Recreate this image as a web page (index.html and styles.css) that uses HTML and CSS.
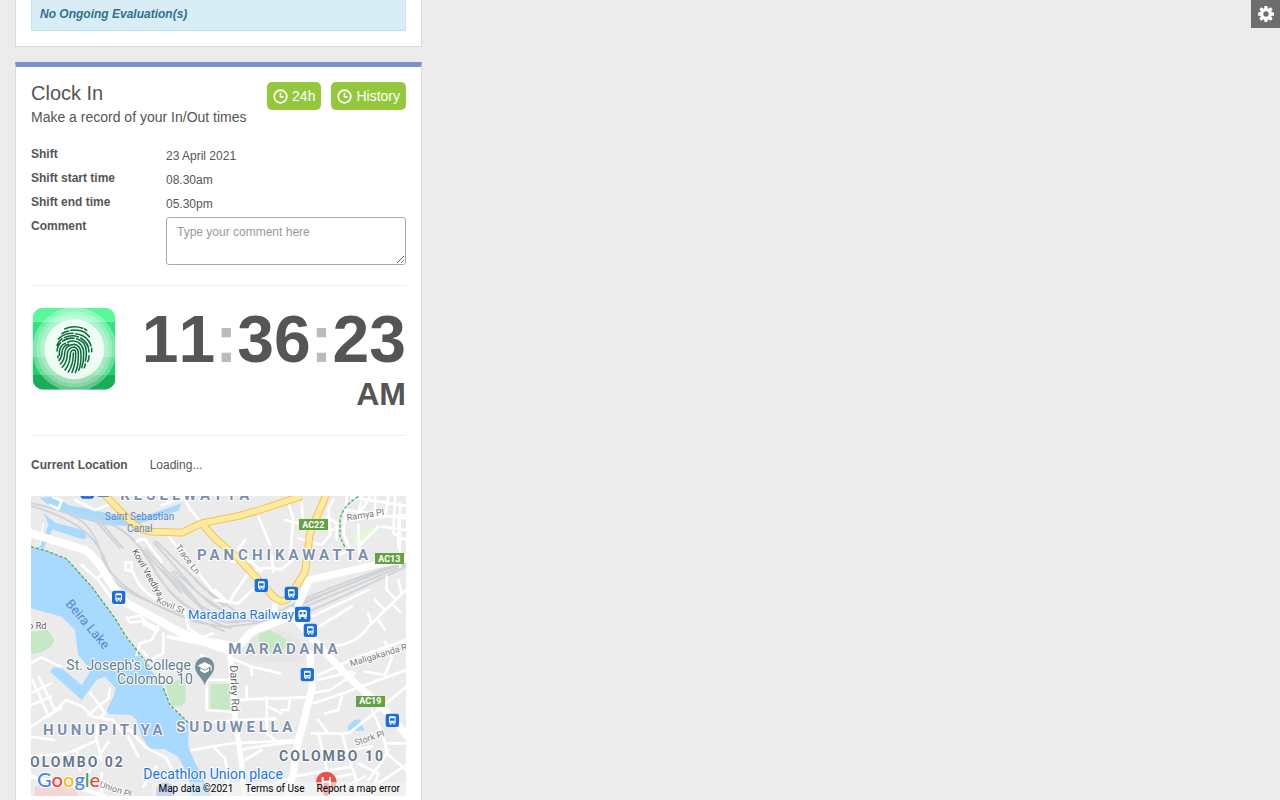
FILE: index.html
```html
<!DOCTYPE html>
<html lang="en">
<head>
<meta charset="utf-8">
<title>Clock In</title>
<link rel="stylesheet" href="styles.css">
</head>
<body>
<button class="settings" type="button" aria-label="Settings">
  <svg width="18" height="18" viewBox="0 0 18 18" aria-hidden="true">
    <g fill="#fff"><circle cx="9" cy="9" r="5.8"/>
    <g id="teeth"><path d="M7.6 1h2.8l.8 4v8l-.8 4H7.6l-.8-4V5z"/><path d="M1 7.6v2.8l4 .8h8l4-.8V7.6l-4-.8H5z"/></g>
    <use href="#teeth" transform="rotate(45 9 9)"/></g>
    <circle cx="9" cy="9" r="2.7" fill="#6d6d6d"/>
  </svg>
</button>
<main class="column">
  <section class="card card-evaluations">
    <p class="notice">No Ongoing Evaluation(s)</p>
  </section>
  <section class="card card-clock">
    <header class="head">
      <div>
        <h1 class="title">Clock In</h1>
        <p class="subtitle">Make a record of your In/Out times</p>
      </div>
      <div class="actions">
        <button class="btn" type="button"><svg class="btn-icon" viewBox="0 0 14 14" aria-hidden="true"><circle cx="7" cy="7" r="5.9"/><path d="M7 3.4V7.4H10"/></svg>24h</button>
        <button class="btn" type="button"><svg class="btn-icon" viewBox="0 0 14 14" aria-hidden="true"><circle cx="7" cy="7" r="5.9"/><path d="M7 3.4V7.4H10"/></svg>History</button>
      </div>
    </header>
    <dl class="shift">
      <dt>Shift</dt><dd>23 April 2021</dd>
      <dt>Shift start time</dt><dd>08.30am</dd>
      <dt>Shift end time</dt><dd>05.30pm</dd>
      <dt><label for="comment">Comment</label></dt>
      <dd class="comment-cell"><textarea id="comment" class="comment" placeholder="Type your comment here"></textarea></dd>
    </dl>
    <div class="punch">
      <button class="finger" type="button" aria-label="Clock in">
        <svg width="86" height="86" viewBox="19 19 258 258" aria-hidden="true">
          <defs><clipPath id="tile"><rect x="24" y="24" width="248" height="246" rx="32"/></clipPath></defs>
          <path d="M21 252q8 18 26 20M275 252q-8 18-26 20" fill="none" stroke="#ddd" stroke-width="2"/>
          <g clip-path="url(#tile)">
            <path fill="#5bf79d" d="M24 24h248v42H24z"/><path fill="#32e57f" d="M24 66h248v52H24z"/>
            <path fill="#3ae181" d="M24 118h248v52H24z"/><path fill="#1fd06c" d="M24 170h248v56H24z"/>
            <path fill="#17ae57" d="M24 226h248v44H24z"/>
            <g fill="#fff"><circle cx="149" cy="149" r="126" fill-opacity=".32"/><circle cx="149" cy="149" r="114" fill-opacity=".24"/><circle cx="149" cy="149" r="103" fill-opacity=".22"/><circle cx="149" cy="149" r="90" fill-opacity=".8"/></g>
          </g>
          <g fill="none" stroke="#0b6b3a" stroke-width="4.6" stroke-linecap="round">
            <path d="M120 88Q147 76 174 86M180 88l6 4M112 102Q120 96 132 94M139 92Q165 88 182 99L194 111M101 118Q118 101 145 101M153 102Q174 104 188 119Q196 127 199 139"/>
            <path d="M97 137Q102 124 112 117M119 114Q140 104 161 112M168 115Q193 130 193 157M97 154Q99 137 108 129M114 124Q130 113 148 116M156 117Q184 125 185 156Q186 171 182 184M201 146v10"/>
            <path d="M104 167Q102 139 122 131M129 128Q146 120 162 129Q177 140 177 160Q178 185 171 204M100 169v5M103 182Q111 174 112 158Q114 138 132 134M107 193Q120 181 120 160Q121 138 149 134Q169 139 169 162Q170 193 162 212"/>
            <path d="M113 203Q128 186 128 162Q130 144 149 142Q162 147 161 164Q162 198 152 219M121 211Q136 192 137 163Q138 151 149 151Q154 153 153 164Q154 190 142 218M131 217Q146 194 146 164v-4M193 168Q193 179 189 186M182 193l-3 11"/>
          </g>
        </svg>
      </button>
      <div class="clock">
        <div class="time">11<span class="colon">:</span>36<span class="colon">:</span>23</div>
        <div class="meridiem">AM</div>
      </div>
    </div>
    <div class="location"><strong>Current Location</strong><span>Loading...</span></div>
    <div class="map">
      <svg class="map-canvas" viewBox="18 18 1125 900" preserveAspectRatio="xMidYMid slice" role="img" aria-label="Map of Colombo">
        <defs>
          <g id="bus"><rect x="-20" y="-20" width="40" height="40" rx="7" fill="#1a6fe0"/><path fill="#fff" fill-rule="evenodd" d="M-10-8q0-4 4-4H6q4 0 4 4V9H7v4H3V9h-6v4h-4V9h-3zM-7-6V1H7V-6zM-6 4v3h3V4zM3 4v3h3V4z"/></g>
        </defs>
        <path fill="#ebebeb" d="M18 18h1125v900H18z"/>
        <g fill="#e2e3e5"><path d="M640 450l140-30 100 70-60 30-150-10z" opacity=".6"/></g>
        <g fill="#c5e8c5">
          <path d="M18 425l50-6 20 30-8 18-30 20-32 6z"/><path d="M700 430l35-10 45 25 5 30-80 20z"/>
          <path d="M420 580l60-15 2 70-12 14h-30z"/><path d="M556 582h60v78h-60z"/>
          <path d="M985 125l78-16v12l-70 60z" fill="#e5f8d5"/>
        </g>
        <g fill="#a8daff">
          <path d="M18 170L65 183 125 207 200 290 270 385 300 440 335 480 350 510 395 560 415 595 435 650 490 698 490 770 512 822 560 918H500L490 860 460 800 420 778 375 778 350 740 335 690 320 675 250 672 245 660 265 620 272 595 240 560 215 570 170 630 75 545 85 532 110 535 170 585 203 532 185 525 160 495 153 450 150 420 110 380 18 355z"/>
          <path d="M45 25L90 18 130 45 230 65 320 92 470 40 460 62 320 108 240 105 150 80 90 60z"/>
          <path d="M55 68l35 30 85 22 12 24-15 4-90-30-26 58-15-4 30-68z"/>
          <path d="M968 708l20-18 20-2 -2 4 12 30h-48z"/>
        </g>
        <g fill="none" stroke="#d0d4d7" stroke-width="6">
          <path d="M18 40Q120 60 165 90T235 210Q265 270 330 310T510 395L620 415M18 48Q130 80 185 130T255 260Q300 310 410 350T600 425"/>
          <path d="M150 75Q270 90 325 150T400 260Q470 360 600 410M210 85Q310 115 350 180T430 300Q490 370 600 395"/>
          <path d="M215 95l70 80M225 95l70 80M385 155L520 310 600 365M392 152L545 300 640 370M440 245L530 350 640 400M448 242L560 345 660 395M510 270L600 350M355 180L470 310M360 175L500 320M400 230L560 385"/>
          <path d="M600 410Q720 405 800 360T1143 218M600 398Q720 390 790 350T1143 212M780 375Q900 325 1143 224M790 390Q960 320 1143 230M800 350L1110 226M570 380L700 395"/>
        </g>
        <g fill="none" stroke="#fff" stroke-width="8" stroke-linejoin="round" stroke-linecap="round">
          <path d="M75 45l25 12 10-25-25-10M150 30l60 30 55-20M170 225l50 45 55 75M215 265l20-15M320 235v-18h-18v22l22 5Q340 300 400 330L480 365 490 415 530 440M335 155l10-7h15l50 68M430 138L560 300 600 335M475 18l20 40 30 35M410 45l60-20"/>
          <path d="M305 380l10 18 45-5-15-15-30 4M400 410l-20 40-35 10-10 35M415 430v60l-40 20-25-30"/>
          <path d="M55 100L45 165" stroke-width="4"/>
          <path d="M18 520l30-18 60 28M22 570l50 110M40 560l50 100M18 610l60-30M18 645l60-25M18 710l70-45 35-35 50 20 30 30 60 10 30 40 20-12 50 55 60 30 20 40M90 665l20-10M195 608l30 40 15 22-20 15M255 595l-5 30-60 50M18 800l110-10 85-38 5-50M215 750l15 60M340 800l-30-60M190 850l60-95M395 830l-40 60M18 855l60 35 80-10M230 850v68M18 740l70 10M155 780l10 60"/>
          <path d="M565 430l-30 10M530 495q20 20 30 30M545 570v90l85 6M545 570h80M500 780l120-20 210-10M570 695l180-10"/>
          <path d="M570 330l70 10 80-75M570 300l40 38 60-90 50-15 50 5 30-25 15-20M660 150l-30 40M700 80l35 85M790 40l15 45-10 120M830 40l5 60 90 20M740 195l5 50M620 215h60l30 30M780 90l60 15M820 145l70 20 25-30-5-80 15-25M905 80l30 20v50"/>
          <path d="M965 20l-10 110 20 50-45 20M980 22l160 25M965 90l178-15M965 60l178 25M1010 20l-10 60M1050 20v60M1090 20l-10 60M1000 105l5 110M1060 110l-60 60M1110 20l-5 110 38 20M1120 90v80M1070 110l73 10M1035 20l-30 50M1125 40v190"/>
          <path d="M840 435L980 350M860 380L1030 300M920 470Q1000 460 1030 410L1143 300M1040 400l-10-30M1060 390l20 30M1080 360l-30-30M1100 340l25 25M1110 325l-25-25V260M1130 310l-10-40M880 555l120-55 143-50M880 570L980 545M1080 455l20 50-20 50-60-10"/>
          <path d="M610 500l70 30 85 20M680 530v25M620 630l225-8M725 620v110l25 20M665 590v40M795 630l-5 30h-20M730 650l40 20M855 610l60-10 30-20 45-30M865 640l60-20 218-80M900 670l40-10 10-40M860 730h110q80-60 173-140M910 730l-30-40M880 730L920 900M950 730l40 130 10 58M1040 660q40 80 45 130l58 50M640 780q80-15 185-25M660 810l50-30M680 910l120-50 180-30M570 775l30 30 10 60-10 50M1000 820l60 30-20 68M980 780l60-10M1080 760h63M1060 880l83-55M890 870l100-20M1090 780l-30 50-30 40M960 890l60-30"/>
          <path stroke-width="16" d="M570 460L615 490 622 590 632 700 650 820 658 918M750 385v-60M360 400l35 18"/>
          <path stroke-width="22" d="M855 490L862 590 835 700 820 750 805 850 785 918M810 385L870 455 970 560 1090 670 1148 740M820 345L852 270 1050 225 1143 208"/>
          <path stroke-width="24" d="M18 130L180 180Q215 205 240 250T305 340L400 390Q480 440 550 455L640 470 680 425 780 385 800 365"/>
          <path stroke-width="12" d="M430 440l100 20 90 30M18 860l80 15 140 43"/>
        </g>
        <g fill="none" stroke-linejoin="round">
          <path stroke="#f0c458" stroke-width="23" d="M235 10L310 88Q340 120 380 125L470 128 530 100 640 78 720 55 830 18M530 100L570 145 640 205 700 270 745 320Q780 350 800 310L840 245 855 130 880 70 905 10"/>
          <path stroke="#ffeaa0" stroke-width="17" d="M235 10L310 88Q340 120 380 125L470 128 530 100 640 78 720 55 830 18M530 100L570 145 640 205 700 270 745 320Q780 350 800 310L840 245 855 130 880 70 905 10"/>
          <path stroke="#4fae67" stroke-width="4" stroke-dasharray="10 5" d="M18 170L65 183 125 207 200 290 270 385 300 435 335 480 380 540M415 595L435 645 490 698M1000 20Q950 50 945 90V140L960 172"/>
        </g>
        <g fill="#f6c9c7" opacity=".6"><path d="M30 890l60-20 60 25 10 23H30z"/></g>
        <g class="area">
          <text x="286" y="31">KESELWATTA</text><text x="516" y="210">PANCHIKAWATTA</text>
          <g class="close"><text x="610" y="492">MARADANA</text><text x="54" y="735">HUNUPITIYA</text><text x="454" y="727">SUDUWELLA</text></g>
          <g class="district"><text x="15" y="832">OLOMBO 02</text><text x="762" y="813">COLOMBO 10</text></g>
        </g>
        <g class="water">
          <text x="240" y="91">Saint Sebastian</text><text x="306" y="125">Canal</text>
          <text class="lake" transform="translate(120 342) rotate(50)">Beira Lake</text>
        </g>
        <g class="street">
          <text transform="translate(450 172) rotate(53)">Trace Ln</text>
          <text class="dark" transform="translate(320 184) rotate(60)">Kovil Veediya</text>
          <text transform="translate(392 336) rotate(24)">Kovil St</text>
          <text class="dark" x="10" y="416">o Rd</text>
          <text transform="translate(967 92) rotate(-9)">Ramya Pl</text>
          <text transform="translate(978 530) rotate(-17)">Maligakanda Rd</text>
          <text class="wide" transform="translate(615 526) rotate(88)">Darley Rd</text>
          <text transform="translate(992 767) rotate(-18)">Stork Pl</text>
          <text transform="translate(222 890) rotate(19)">Union Pl</text>
        </g>
        <g class="place">
          <text x="489" y="387">Maradana Railway</text><text class="shop" x="355" y="867">Decathlon Union place</text>
          <g class="school"><text x="124" y="540">St. Joseph's College</text><text x="276" y="582">Colombo 10</text></g>
        </g>
        <g fill="#66a144"><path d="M822 87h87v33h-87zM1050 189h87v33h-87zM993 618h87v33h-87z"/></g>
        <g class="shield"><text x="865" y="113">AC22</text><text x="1093" y="215">AC13</text><text x="1036" y="643">AC19</text></g>
        <use href="#bus" x="187" y="6"/><use href="#bus" x="235" y="0"/><use href="#bus" x="281" y="322"/>
        <use href="#bus" x="709" y="286"/><use href="#bus" x="799" y="310"/><use href="#bus" x="856" y="421"/>
        <use href="#bus" x="847" y="554"/><use href="#bus" x="1102" y="691"/>
        <g transform="translate(833 373)"><rect x="-23" y="-23" width="46" height="46" rx="7" fill="#1a6fe0"/><path fill="#fff" fill-rule="evenodd" d="M-13-8q0-5 6-5H7q6 0 6 5V8H9l4 6H7L4 8H-4l-3 6h-6l4-6h-4zM-9-7V0h7v-7zM2-7V0h7v-7z"/></g>
        <path fill="#768e9a" stroke="#fff" stroke-width="2" d="M539 590C534 563 509 555 509 530a30 30 0 0 1 60 0C569 555 544 563 539 590z"/>
        <path fill="#fff" d="M518 527l21-11 21 11v15h-3v-13l-18 10zM526 535l13 7 13-7v8l-13 7-13-7z"/>
        <path fill="#ea5147" d="M904 930C899 903 873 895 873 876a31 31 0 0 1 62 0C935 895 909 903 904 930z"/>
        <path fill="#fff" d="M890 861h6v11h16v-11h6v29h-6v-12h-16v12h-6z"/>
        <circle cx="421" cy="905" r="28" fill="#7597e8" opacity=".7"/>
        <text class="logo" x="36" y="890"><tspan fill="#4285f4">G</tspan><tspan fill="#ea4335">o</tspan><tspan fill="#fbbc05">o</tspan><tspan fill="#4285f4">g</tspan><tspan fill="#34a853">l</tspan><tspan fill="#ea4335">e</tspan></text>
      </svg>
      <div class="credits"><span>Map data ©2021</span><a href="#terms">Terms of Use</a><a href="#report">Report a map error</a></div>
    </div>
  </section>
</main>
</body>
</html>
```

FILE: styles.css
```css
* { box-sizing: border-box; }
body { margin: 0; background: #ececec; color: #555; font: 12px/18px "Liberation Sans", Arial, sans-serif; }
h1, p, dl, dd { margin: 0; }
button { border: 0; font-family: inherit; cursor: pointer; }
.column { width: 100%; max-width: 437px; padding: 0 15px; }
.card { background: #fff; border: 1px solid #d9d9d9; padding: 15px; }
.card-evaluations { border-top: 0; padding-top: 0; margin-bottom: 15px; }
.card-clock { border-top: 5px solid #7b91cb; }
.notice { padding: 5px 8px 7px; background: #d9edf7; border: 1px solid #bce8f1; border-top: 0; color: #31708f; font-size: 12px; font-weight: bold; font-style: italic; }

.settings { position: fixed; top: 0; right: 0; display: grid; place-items: center; width: 29px; height: 28px; padding: 0; background: #6d6d6d; }

.head { display: flex; justify-content: space-between; align-items: flex-start; }
.title { font-size: 20px; line-height: 22px; font-weight: normal; }
.subtitle { font-size: 14px; line-height: 26px; }
.actions { display: flex; gap: 10px; }
.btn { display: flex; align-items: center; gap: 4px; height: 28px; padding: 0 6px; border-radius: 5px; background: #93c83d; color: #fff; font-size: 14px; }
.btn-icon { width: 15px; height: 15px; fill: none; stroke: #fff; stroke-width: 1.6; }

.shift { display: grid; grid-template-columns: 135px 1fr; grid-auto-rows: minmax(24px, auto); margin-top: 12px; padding-bottom: 20px; border-bottom: 1px solid #eee; }
.shift dt { padding-top: 3px; font-weight: bold; }
.shift dd { padding-top: 5px; }
.shift .comment-cell { padding-top: 3px; }
.comment { display: block; width: 100%; height: 48px; padding: 5px 10px; border: 1px solid #aaa; border-radius: 3px; background: #fff; color: #555; font: inherit; resize: vertical; }
.comment::placeholder { color: #999; }

.punch { display: flex; justify-content: space-between; align-items: flex-start; padding: 20px 0 18px; border-bottom: 1px solid #eee; }
.finger { padding: 0; background: none; }
.finger svg { display: block; }
.clock { text-align: right; font-weight: bold; font-kerning: none; }
.time { font-size: 66px; line-height: 66px; }
.colon { color: #bbb; }
.meridiem { font-size: 32px; line-height: 45px; }

.location { display: flex; gap: 22px; padding: 20px 0 22px; }

.map { position: relative; overflow: hidden; }
.map-canvas { display: block; width: 100%; height: 300px; font-family: Roboto, sans-serif; }
.map-canvas text { paint-order: stroke; stroke: #fff; stroke-width: 6px; stroke-linejoin: round; }
.area { font-size: 45px; font-weight: 700; letter-spacing: 12px; fill: #7b8eab; }
.close { letter-spacing: 11px; }
.district { font-size: 42px; letter-spacing: 6px; fill: #66798c; }
.map-canvas .water text { font-size: 30px; fill: #5b86cb; stroke: none; }
.map-canvas .water .lake { font-size: 39px; }
.street { font-size: 27px; fill: #777; }
.street .dark { fill: #555; }
.street .wide { font-size: 33px; fill: #666; }
.place { font-size: 39px; fill: #1a73e8; }
.place .shop { font-size: 42px; }
.school { font-size: 42px; fill: #607d8b; }
.map-canvas .shield text { font-size: 27px; font-weight: 700; fill: #fff; stroke: none; text-anchor: middle; }
.map-canvas .logo { font: 500 60px Lato, sans-serif; }
.credits { position: absolute; right: 0; bottom: 0; display: flex; background: linear-gradient(90deg, rgba(245, 245, 245, 0.5), rgba(245, 245, 245, 0.7)); font: 10px/14px Roboto, sans-serif; color: #000; }
.credits > * { padding: 0 6px; color: inherit; text-decoration: none; }
```
